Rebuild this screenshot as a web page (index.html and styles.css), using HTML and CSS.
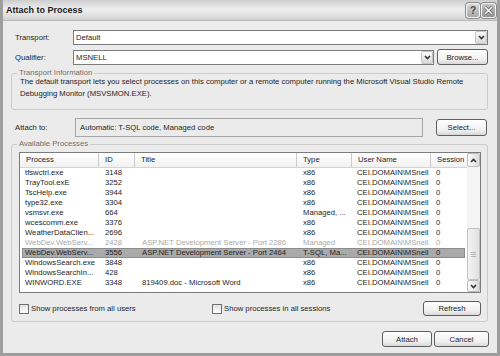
FILE: index.html
```html
<!DOCTYPE html>
<html lang="en">
<head>
  <meta charset="UTF-8" />
  <title>Attach to Process</title>
  <link rel="stylesheet" href="styles.css">
</head>
<body>
  <div class="window">
    <div class="titlebar">
      <span class="title">Attach to Process</span>
      <span class="cap-btn help">?</span>
      <span class="cap-btn close">
        <svg width="9" height="9" viewBox="0 0 9 9">
          <path d="M1 1 L8 8 M8 1 L1 8" stroke="#5a5a5a" stroke-width="3" />
          <path d="M1 1 L8 8 M8 1 L1 8" stroke="#fff" stroke-width="1.6" />
        </svg>
      </span>
    </div>

    <div class="content">
      <div class="row row-transport">
        <span class="label">Transport:</span>
        <div class="combo">
          <span class="combo-text">Default</span>
          <span class="combo-arrow"><svg width="7" height="5" viewBox="0 0 7 5"><path d="M1 1 L3.5 3.5 L6 1" fill="none" stroke="#333" stroke-width="1.6" /></svg></span>
        </div>
      </div>

      <div class="row row-qualifier">
        <span class="label">Qualifier:</span>
        <div class="combo">
          <span class="combo-text">MSNELL</span>
          <span class="combo-arrow"><svg width="7" height="5" viewBox="0 0 7 5"><path d="M1 1 L3.5 3.5 L6 1" fill="none" stroke="#333" stroke-width="1.6" /></svg></span>
        </div>
        <button class="btn btn-browse">Browse...</button>
      </div>

      <fieldset class="group group-info">
        <legend>Transport Information</legend>
        <p class="info-text">The default transport lets you select processes on this computer or a remote computer running the Microsoft Visual Studio Remote<br>Debugging Monitor (MSVSMON.EXE).</p>
      </fieldset>

      <div class="row row-attach">
        <span class="label label-attach">Attach to:</span>
        <div class="readonly">Automatic: T-SQL code, Managed code</div>
        <button class="btn btn-select">Select...</button>
      </div>

      <fieldset class="group group-processes">
        <legend>Available Processes</legend>
        <div class="listview">
          <div class="list-main">
            <div class="list-header">
              <span>Process</span>
              <span>ID</span>
              <span>Title</span>
              <span>Type</span>
              <span>User Name</span>
              <span>Session</span>
            </div>
            <div class="lv-row"><span>tfswctrl.exe</span><span>3148</span><span></span><span>x86</span><span>CEI.DOMAIN\MSnell</span><span>0</span></div>
            <div class="lv-row"><span>TrayTool.exE</span><span>3252</span><span></span><span>x86</span><span>CEI.DOMAIN\MSnell</span><span>0</span></div>
            <div class="lv-row"><span>TscHelp.exe</span><span>3944</span><span></span><span>x86</span><span>CEI.DOMAIN\MSnell</span><span>0</span></div>
            <div class="lv-row"><span>type32.exe</span><span>3304</span><span></span><span>x86</span><span>CEI.DOMAIN\MSnell</span><span>0</span></div>
            <div class="lv-row"><span>vsmsvr.exe</span><span>664</span><span></span><span>Managed, ...</span><span>CEI.DOMAIN\MSnell</span><span>0</span></div>
            <div class="lv-row"><span>wcescomm.exe</span><span>3376</span><span></span><span>x86</span><span>CEI.DOMAIN\MSnell</span><span>0</span></div>
            <div class="lv-row"><span>WeatherDataClien...</span><span>2696</span><span></span><span>x86</span><span>CEI.DOMAIN\MSnell</span><span>0</span></div>
            <div class="lv-row disabled"><span>WebDev.WebServ...</span><span>2428</span><span>ASP.NET Development Server - Port 2286</span><span>Managed</span><span>CEI.DOMAIN\MSnell</span><span>0</span></div>
            <div class="lv-row selected"><span>WebDev.WebServ...</span><span>3556</span><span>ASP.NET Development Server - Port 2464</span><span>T-SQL, Ma...</span><span>CEI.DOMAIN\MSnell</span><span>0</span></div>
            <div class="lv-row"><span>WindowsSearch.exe</span><span>3848</span><span></span><span>x86</span><span>CEI.DOMAIN\MSnell</span><span>0</span></div>
            <div class="lv-row"><span>WindowsSearchIn...</span><span>428</span><span></span><span>x86</span><span>CEI.DOMAIN\MSnell</span><span>0</span></div>
            <div class="lv-row"><span>WINWORD.EXE</span><span>3348</span><span>819409.doc - Microsoft Word</span><span>x86</span><span>CEI.DOMAIN\MSnell</span><span>0</span></div>
          </div>
          <div class="scrollbar">
            <span class="sb-btn sb-up"><svg width="7" height="5" viewBox="0 0 7 5"><path d="M1 4 L3.5 1.5 L6 4" fill="none" stroke="#333" stroke-width="1.6" /></svg></span>
            <span class="sb-track"></span>
            <span class="sb-thumb"><svg width="5" height="5" viewBox="0 0 5 5"><path d="M0 0.5 H5 M0 2.5 H5 M0 4.5 H5" stroke="#b4b4b4" stroke-width="1" /></svg></span>
            <span class="sb-btn sb-down"><svg width="7" height="5" viewBox="0 0 7 5"><path d="M1 1 L3.5 3.5 L6 1" fill="none" stroke="#333" stroke-width="1.6" /></svg></span>
          </div>
        </div>

        <div class="options">
          <label class="check"><span class="check-box"></span>Show processes from all users</label>
          <label class="check"><span class="check-box"></span>Show processes in all sessions</label>
          <button class="btn btn-refresh">Refresh</button>
        </div>
      </fieldset>

      <div class="dialog-buttons">
        <button class="btn btn-attach">Attach</button>
        <button class="btn btn-cancel">Cancel</button>
      </div>
    </div>
  </div>
</body>
</html>
```

FILE: styles.css
```css
* {
  box-sizing: border-box;
}

body {
  margin: 0;
  font-family: "Liberation Sans", Arial, sans-serif;
  font-size: 7.7px;
  color: #1e1e1e;
  background: #ebebeb;
}

.window {
  width: 500px;
  height: 356px;
  background: #ebebeb;
  border: 3px solid #9e9e9e;
  border-top: 0;
  overflow: hidden;
}

.titlebar {
  height: 21px;
  display: flex;
  align-items: center;
  padding: 0 1px 0 3px;
  background: linear-gradient(to bottom, #cdcdcd 0%, #eeeeee 45%, #e2e2e2 75%, #d0d0d0 100%);
  border-bottom: 1px solid #b9b9b9;
}

.title {
  flex: 1;
  font-size: 9px;
  font-weight: bold;
  color: #1a1a1a;
}

.cap-btn {
  width: 14px;
  height: 15px;
  margin-left: 1px;
  display: flex;
  align-items: center;
  justify-content: center;
  border: 1px solid #f4f4f4;
  border-radius: 3px;
  box-shadow: 0 0 0 1px #8a8a8a;
  background: linear-gradient(to bottom, #d8d8d8, #a9a9a9);
}

.help {
  font-size: 10px;
  font-weight: bold;
  color: #4a4a4a;
}

.close {
  width: 15px;
  background: linear-gradient(to bottom, #c4c4c4, #939393);
}

.content {
  padding: 9px 9px 0 8px;
}

.row {
  display: flex;
  align-items: center;
  padding-left: 4px;
}

.label {
  width: 58px;
  flex: none;
}

.row-transport {
  height: 15px;
}

.row-qualifier {
  height: 16px;
  margin-top: 4px;
}

.combo {
  flex: 1;
  height: 15px;
  display: flex;
  align-items: center;
  padding-left: 2px;
  background: #fff;
  border: 1px solid #7c7c7c;
}

.combo-text {
  flex: 1;
}

.combo-arrow {
  width: 12px;
  height: 13px;
  display: flex;
  align-items: center;
  justify-content: center;
  border: 1px solid #c6c6c6;
  border-radius: 2px;
  background: linear-gradient(to bottom, #fafafa, #d9d9d9);
}

.btn {
  font: inherit;
  color: #1e1e1e;
  height: 16px;
  padding: 0;
  border: 1px solid #5f5f5f;
  border-radius: 3px;
  background: linear-gradient(to bottom, #ffffff 0%, #efefef 70%, #d7d7d7 100%);
}

.btn-browse {
  width: 51px;
  margin-left: 3px;
}

.group {
  margin: 3px 0 0;
  padding: 0 6px 9px 7px;
  border: 1px solid #cbcbcb;
  border-radius: 3px;
  min-width: 0;
}

.group legend {
  padding: 0 2px;
  margin-left: -2px;
  line-height: 10px;
  color: #6f6f6f;
}

.info-text {
  margin: -2px 0 0;
  padding-left: 1px;
  line-height: 12px;
  white-space: nowrap;
}

.row-attach {
  height: 19px;
  margin-top: 8px;
}

.label-attach {
  width: 60px;
}

.readonly {
  flex: 1;
  height: 19px;
  line-height: 17px;
  padding-left: 4px;
  border: 1px solid #a6a6a6;
  background: #ebebeb;
}

.btn-select {
  width: 51px;
  height: 17px;
  margin: 0 1px 0 13px;
}

.group-processes {
  margin-top: 2px;
  padding: 3px 6px 5px 7px;
}

.listview {
  display: flex;
  height: 141px;
  border: 1px solid #7c7c7c;
  background: #fff;
}

.list-main {
  flex: 1;
  min-width: 0;
}

.list-header {
  display: grid;
  grid-template-columns: 79px 36px 162px 55px 79px 1fr;
  height: 15px;
  line-height: 14px;
  border-bottom: 1px solid #d4d4d4;
  background: linear-gradient(to bottom, #ffffff, #f1f1f1);
}

.list-header span {
  padding-left: 6px;
  border-right: 1px solid #cacaca;
}

.list-header span:last-child {
  border-right: 0;
}

.lv-row {
  display: grid;
  grid-template-columns: 80px 37px 161px 54px 79px 1fr;
  height: 10px;
  line-height: 10px;
  margin: 0 2px;
}

.lv-row span {
  padding-left: 3px;
  white-space: nowrap;
  overflow: hidden;
}

.lv-row.disabled {
  color: #a8a8a8;
}

.lv-row.selected {
  background: #aaaaaa;
  box-shadow: inset 0 0 0 1px #8c8c8c;
}

.scrollbar {
  width: 13px;
  display: flex;
  flex-direction: column;
  background: #f5f5f5;
}

.sb-btn {
  height: 14px;
  display: flex;
  align-items: center;
  justify-content: center;
  border: 1px solid #bcbcbc;
  border-radius: 2px;
  background: linear-gradient(to right, #fbfbfb, #dcdcdc);
}

.sb-down {
  height: 12px;
}

.sb-track {
  flex: 1;
}

.sb-thumb {
  height: 52px;
  display: flex;
  align-items: center;
  justify-content: center;
  border: 1px solid #c2c2c2;
  border-radius: 2px;
  background: linear-gradient(to right, #f4f4f4, #e0e0e0);
}

.options {
  display: flex;
  align-items: center;
  height: 15px;
  margin-top: 8px;
}

.check {
  width: 193px;
  display: flex;
  align-items: center;
}

.check-box {
  width: 10px;
  height: 10px;
  margin-right: 2px;
  border: 1px solid #707070;
  background: linear-gradient(to bottom, #e2e2e2, #fdfdfd);
}

.btn-refresh {
  width: 58px;
  height: 15px;
  margin-left: auto;
}

.dialog-buttons {
  display: flex;
  justify-content: flex-end;
  gap: 2px;
  margin: 9px -1px 0 0;
}

.btn-attach {
  width: 50px;
}

.btn-cancel {
  width: 55px;
}
```
